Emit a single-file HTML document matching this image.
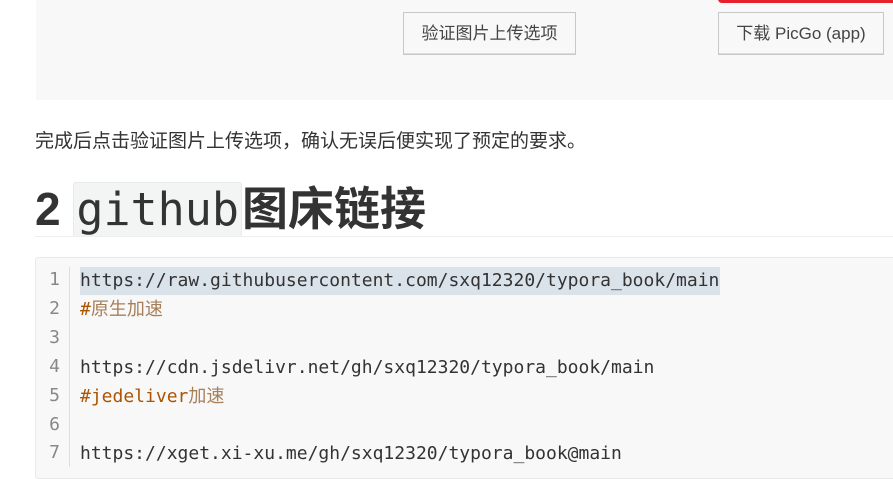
<!DOCTYPE html>
<html><head><meta charset="utf-8"><style>
body{margin:0;width:893px;height:464px;overflow:hidden;background:#fff;font-family:"Liberation Sans","Noto Sans CJK SC",sans-serif;color:#333;position:relative}
.img{position:absolute;left:36px;top:0;width:857px;height:100px;background:#f8f8f8}
.red{position:absolute;left:718px;top:-6px;width:180px;height:9px;background:#e8202a;border-radius:4px}
.btn{position:absolute;top:12px;height:41px;border:1px solid #c8c8c8;background:#f8f8f8;font-size:17px;color:#444;line-height:41px;text-align:center;box-shadow:0 -1px 0 #ddd inset}
p{position:absolute;left:35px;top:129px;margin:0;font-size:19px;line-height:26px;color:#333}
h2{position:absolute;left:35px;top:179px;margin:0;font-size:46px;font-weight:bold;line-height:60px;color:#333;white-space:nowrap}
h2 code{font-family:"DejaVu Sans Mono",monospace;font-weight:normal;font-size:45px;background:#f3f4f4;border:1px solid #e7eaed;border-radius:3px;padding:0 2px;color:#333}
.hr{position:absolute;left:35px;top:236px;width:858px;height:1px;background:#eee}
.code{position:absolute;left:35px;top:257px;width:870px;height:220px;background:#f8f8f8;border:1px solid #e7eaed;border-radius:3px}
.gut{position:absolute;left:69px;top:267px;width:1px;height:200px;background:#ddd}
.ln{position:absolute;left:38px;width:22px;text-align:right;font-family:"DejaVu Sans Mono",monospace;font-size:18px;color:#888}
.l{position:absolute;left:80px;font-family:"DejaVu Sans Mono","Noto Sans CJK SC",monospace;font-size:18px;color:#333;white-space:pre;line-height:28px}
.hl{position:absolute;left:80px;top:267px;width:640px;height:28px;background:#dae2ea}
.c{color:#a50}.c2{color:#a67f59}
</style></head><body>
<div class="img"></div>
<div class="red"></div>
<div class="btn" style="left:403px;width:171px">验证图片上传选项</div>
<div class="btn" style="left:718px;width:164px">下载 PicGo (app)</div>
<p>完成后点击验证图片上传选项，确认无误后便实现了预定的要求。</p>
<h2>2 <code>github</code>图床链接</h2>
<div class="hr"></div>
<div class="code"></div>
<div class="gut"></div>
<div class="hl"></div>
<div class="ln" style="top:269px">1</div><div class="ln" style="top:298px">2</div><div class="ln" style="top:327px">3</div><div class="ln" style="top:356px">4</div><div class="ln" style="top:385px">5</div><div class="ln" style="top:414px">6</div><div class="ln" style="top:442px">7</div>
<div class="l" style="top:267px">https://raw.githubusercontent.com/sxq12320/typora_book/main</div>
<div class="l" style="top:296px"><span class="c">#</span><span class="c2">原生加速</span></div>
<div class="l" style="top:354px">https://cdn.jsdelivr.net/gh/sxq12320/typora_book/main</div>
<div class="l" style="top:383px"><span class="c">#jedeliver</span><span class="c2">加速</span></div>
<div class="l" style="top:440px">https://xget.xi-xu.me/gh/sxq12320/typora_book@main</div>
</body></html>
